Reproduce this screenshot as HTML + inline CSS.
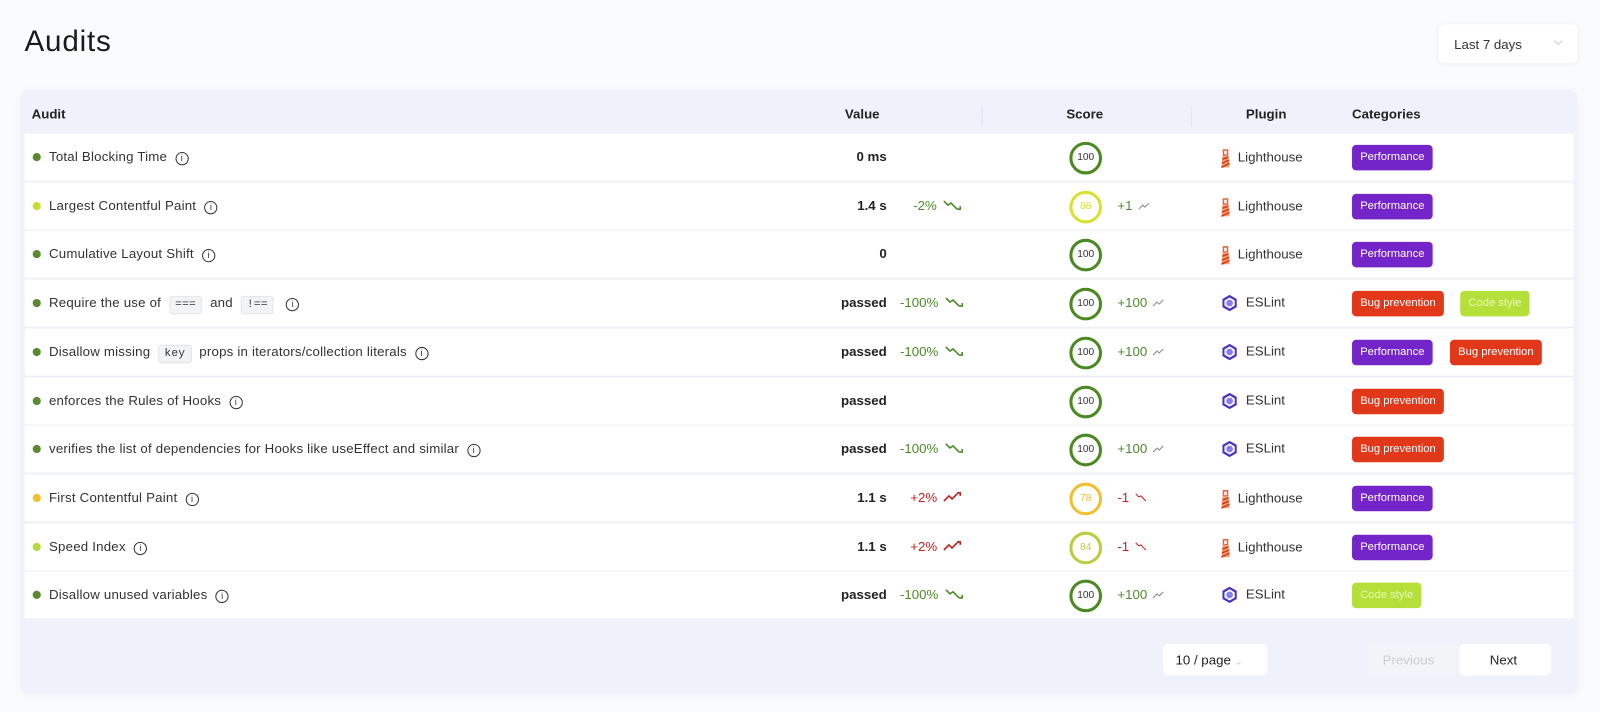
<!DOCTYPE html>
<html><head><meta charset="utf-8"><style>
*{box-sizing:border-box;margin:0;padding:0}
body{width:1600px;height:712px;background:#fafbfe;font-family:"Liberation Sans",sans-serif;color:#222;overflow:hidden}
#w{position:absolute;left:0;top:0;width:1568px;height:698px;transform:scale(1.0204);transform-origin:0 0}
h1{position:absolute;left:24px;top:25px;font-size:29px;font-weight:normal;letter-spacing:.8px;color:#1a1a1a}
.sel{position:absolute;left:1410px;top:24px;width:136px;height:38px;background:#fff;border-radius:6px;box-shadow:0 1px 6px rgba(0,0,0,.05);font-size:13px;color:#333;padding:12px 0 0 15px}
.sel i{position:absolute;right:16px;top:13px;width:6px;height:6px;border-right:1px solid #ccc;border-bottom:1px solid #ccc;transform:rotate(45deg)}
.card{position:absolute;left:20px;top:88px;width:1526px;height:592px;background:#eff1fb;border-radius:8px;box-shadow:0 2px 10px rgba(0,0,0,.04)}
.hd{position:absolute;top:0;height:44px;left:0;right:0;font-size:13px;font-weight:bold;color:#222}
.hd span{position:absolute;top:16px}
.sep{position:absolute;top:14px;width:1px;height:20px;background:#e2e4ef}
.row{position:absolute;left:24px;width:1518px;height:47px;background:#fff;border-bottom:1px solid #eef0f6;font-size:13px}
.row>*{position:absolute}
.dot{left:8px;top:19px;width:8px;height:8px;border-radius:50%;background:#5a8a2e}
.nm{left:24px;top:15px;color:#333;white-space:nowrap;letter-spacing:.2px}
.nm code{font-family:"Liberation Mono",monospace;font-size:11px;background:#f2f3f5;border:1px solid #e5e5e5;border-radius:3px;padding:2px 5px;margin:0 4px}
.info{display:inline-block;width:13px;height:13px;border:1px solid #333;border-radius:50%;font-size:9px;text-align:center;line-height:11px;margin-left:8px;vertical-align:0}
.val{right:673px;top:15px;font-weight:bold;color:#222}
.dl{top:15px;color:#4d8a2a}
.dl.r{color:#c42020}
.sc{left:1024px;top:8px;width:32px;height:32px;border-radius:50%;border:3px solid #4b8a22;font-size:10px;text-align:center;line-height:26px;color:#333}
.sd{left:1071px;top:15px;color:#4d8a2a}
.sd.r{color:#c42020}
.pl{left:1172px;top:14px;color:#333;white-space:nowrap}
.pl svg{vertical-align:middle;margin-right:7px}
.tg{top:11px;height:25px;border-radius:4px;color:#fff;font-size:11px;line-height:25px;padding:0 8px;white-space:nowrap}
.pf{background:#7425c9}.bg{background:#e03818}.cs{background:#b5e03a;color:#e8f7c0}
.pg{position:absolute;top:631px;height:31px;background:#fff;border-radius:5px;font-size:13px;line-height:31px;padding-left:12px}
</style></head><body><div id="w">
<h1>Audits</h1>
<div class="sel">Last 7 days<i></i></div>
<div class="card">
<div class="hd"><span style="left:11px">Audit</span><span style="left:808px">Value</span><span class="sep" style="left:942px"></span><span style="left:1025px">Score</span><span class="sep" style="left:1147px"></span><span style="left:1201px">Plugin</span><span style="left:1305px">Categories</span></div>
</div>
<div id="rows"></div>
<div class="pg" style="left:1140px;width:102px">10 / page <span style="color:#ccc;font-size:10px">&#8964;</span></div>
<div class="pg" style="left:1340px;width:88px;background:#f3f4f7;color:#ccc;padding-left:15px">Previous</div>
<div class="pg" style="left:1430px;width:90px;padding-left:30px">Next</div>
</div>
<script>
var LH='<svg width="10" height="20" viewBox="0 0 10 20"><path d="M3 2h4v5H3z" fill="none" stroke="#e8633a" stroke-width="1.5"/><path d="M2 8h6l1 11H1z" fill="#f0a070"/><path d="M2 11l6-2M1.5 15l7-3M1 19l8-4" stroke="#d63b1c" stroke-width="1.6"/></svg>Lighthouse';
var ES='<svg width="18" height="18" viewBox="0 0 18 18"><path d="M9 1l7 4v8l-7 4-7-4V5z" fill="#4b32c3"/><path d="M9 3.5l5 3v5l-5 3-5-3v-5z" fill="#fff"/><circle cx="9" cy="9" r="3.3" fill="#8080f2"/></svg>ESLint';
var dn='<svg width="18" height="12" viewBox="0 0 18 12" style="vertical-align:-1px;margin-left:6px"><path d="M1 2l4 4 3-2 6 6M14 10h3V7" fill="none" stroke="currentColor" stroke-width="1.6"/></svg>';
var up='<svg width="18" height="12" viewBox="0 0 18 12" style="vertical-align:-1px;margin-left:6px"><path d="M1 10l5-5 3 3 6-6M14 2h3v3" fill="none" stroke="currentColor" stroke-width="1.6"/></svg>';
var sup='<svg width="12" height="9" viewBox="0 0 12 9" style="margin-left:5px"><path d="M1 8l4-4 2 2 4-4" fill="none" stroke="#888" stroke-width="1"/></svg>';
var sdn='<svg width="12" height="9" viewBox="0 0 12 9" style="margin-left:5px"><path d="M1 1l3 3 2-1 5 5" fill="none" stroke="#c42020" stroke-width="1"/></svg>';
var P='<span class="tg pf" style="left:1301px">Performance</span>';
var R=[
['#5a8a2e','Total Blocking Time','0 ms','',0,'100','#4b8a22','',0,LH,P],
['#c8dc30','Largest Contentful Paint','1.4 s','-2%'+dn,0,'88','#d8e030','+1'+sup,0,LH,P],
['#5a8a2e','Cumulative Layout Shift','0','',0,'100','#4b8a22','',0,LH,P],
['#5a8a2e','Require the use of <code>===</code> and <code>!==</code>','passed','-100%'+dn,0,'100','#4b8a22','+100'+sup,0,ES,'<span class="tg bg" style="left:1301px">Bug prevention</span><span class="tg cs" style="left:1407px">Code style</span>'],
['#5a8a2e','Disallow missing <code>key</code> props in iterators/collection literals','passed','-100%'+dn,0,'100','#4b8a22','+100'+sup,0,ES,P+'<span class="tg bg" style="left:1397px">Bug prevention</span>'],
['#5a8a2e','enforces the Rules of Hooks','passed','',0,'100','#4b8a22','',0,ES,'<span class="tg bg" style="left:1301px">Bug prevention</span>'],
['#5a8a2e','verifies the list of dependencies for Hooks like useEffect and similar','passed','-100%'+dn,0,'100','#4b8a22','+100'+sup,0,ES,'<span class="tg bg" style="left:1301px">Bug prevention</span>'],
['#f0c030','First Contentful Paint','1.1 s','+2%'+up,1,'78','#f0c030','-1'+sdn,1,LH,P],
['#b5d840','Speed Index','1.1 s','+2%'+up,1,'84','#b5d040','-1'+sdn,1,LH,P],
['#5a8a2e','Disallow unused variables','passed','-100%'+dn,0,'100','#4b8a22','+100'+sup,0,ES,'<span class="tg cs" style="left:1301px">Code style</span>']];
var h='';
R.forEach(function(r,i){
var t=131+i*47.7;
h+='<div class="row" style="top:'+t+'px"><span class="dot" style="background:'+r[0]+'"></span><span class="nm">'+r[1]+'<span class="info">i</span></span><span class="val">'+r[2]+'</span>'+(r[3]?'<span class="dl'+(r[4]?' r':'')+'" style="left:'+(r[2]=='passed'?858:(r[4]?868:871))+'px">'+r[3]+'</span>':'')+'<span class="sc" style="border-color:'+r[6]+';'+(r[5]!='100'?'color:'+r[6]:'')+'">'+r[5]+'</span>'+(r[7]?'<span class="sd'+(r[8]?' r':'')+'">'+r[7]+'</span>':'')+'<span class="pl">'+r[9]+'</span>'+r[10]+'</div>';
});
document.getElementById('rows').innerHTML=h;
</script>
</body></html>
